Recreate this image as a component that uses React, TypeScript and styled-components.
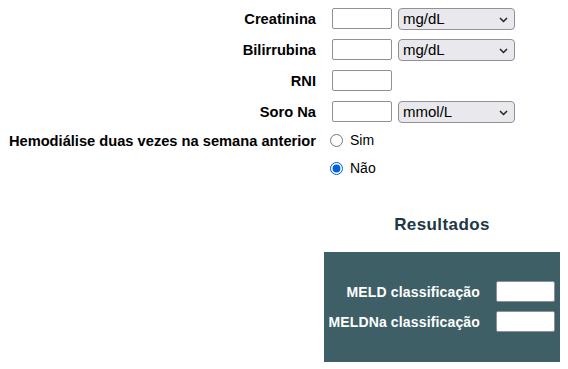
import React from 'react';
import styled, { createGlobalStyle } from 'styled-components';

const GlobalStyle = createGlobalStyle`
  body {
    margin: 8px;
    font-family: 'Liberation Sans', Arial, sans-serif;
    background: #fff;
    color: #000;
  }
`;

const Form = styled.div`
  display: grid;
  grid-template-columns: 308px auto;
  column-gap: 16px;
  row-gap: 10px;
  align-items: center;
`;

const Label = styled.label`
  justify-self: end;
  font-size: 14.67px;
  font-weight: bold;
  line-height: 16px;
  align-self: center;
`;

const TopLabel = styled(Label)`
  align-self: start;
  margin-top: 1px;
`;

const Field = styled.div`
  display: flex;
  align-items: center;
  gap: 6px;
  height: 21px;
`;

const TextInput = styled.input`
  box-sizing: border-box;
  width: 60px;
  height: 21px;
  border: 1px solid #8f8f9d;
  border-radius: 2px;
  background: #fff;
  padding: 0 4px;
  margin: 0;
  font: 13px 'Liberation Sans', Arial, sans-serif;
`;

const SelectWrap = styled.div`
  position: relative;
  width: 117px;
  height: 22px;
`;

const Select = styled.select`
  appearance: none;
  box-sizing: border-box;
  width: 100%;
  height: 100%;
  margin: 0;
  padding: 0 20px 0 4px;
  border: 1px solid #8f8f9d;
  border-radius: 4px;
  background: #e9e9ed;
  color: #000;
  font: 15px 'Liberation Sans', Arial, sans-serif;
`;

const Chevron = styled.svg`
  position: absolute;
  right: 7px;
  top: 9px;
  pointer-events: none;
`;

const Radios = styled.div`
  display: flex;
  flex-direction: column;
  gap: 12px;
  margin-left: -2px;
`;

const RadioOption = styled.label`
  display: flex;
  align-items: center;
  gap: 7px;
  height: 16px;
  font-size: 14px;
`;

const Radio = styled.input`
  width: 13px;
  height: 13px;
  margin: 0;
  accent-color: #0060df;
`;

const Results = styled.section`
  width: 236px;
  margin: 39px 0 0 auto;
`;

const Heading = styled.h2`
  margin: 0 0 17px;
  text-align: center;
  font-size: 17px;
  line-height: 20px;
  letter-spacing: 0.4px;
  color: #1b3843;
`;

const Panel = styled.div`
  box-sizing: border-box;
  height: 110px;
  background: #3e5f66;
  padding: 29px 5px 0 4px;
  display: flex;
  flex-direction: column;
  gap: 9px;
`;

const ResultRow = styled.div`
  display: flex;
  justify-content: flex-end;
  align-items: center;
  gap: 16px;
`;

const ResultLabel = styled.label`
  color: #fff;
  font-size: 14px;
  font-weight: bold;
  letter-spacing: 0.15px;
`;

const ResultInput = styled(TextInput)`
  width: 59px;
`;

const UnitSelect: React.FC<{ options: string[] }> = ({ options }) => (
  <SelectWrap>
    <Select defaultValue={options[0]}>
      {options.map(o => (
        <option key={o}>{o}</option>
      ))}
    </Select>
    <Chevron width="9" height="6" viewBox="0 0 9 6">
      <polyline points="1,1 4.5,4.5 8,1" fill="none" stroke="#222" strokeWidth="1.5" />
    </Chevron>
  </SelectWrap>
);

export default function App() {
  return (
    <>
      <GlobalStyle />
      <Form>
        <Label>Creatinina</Label>
        <Field>
          <TextInput />
          <UnitSelect options={['mg/dL', 'µmol/L']} />
        </Field>

        <Label>Bilirrubina</Label>
        <Field>
          <TextInput />
          <UnitSelect options={['mg/dL', 'µmol/L']} />
        </Field>

        <Label>RNI</Label>
        <Field>
          <TextInput />
        </Field>

        <Label>Soro Na</Label>
        <Field>
          <TextInput />
          <UnitSelect options={['mmol/L', 'mEq/L']} />
        </Field>

        <TopLabel>Hemodiálise duas vezes na semana anterior</TopLabel>
        <Radios>
          <RadioOption>
            <Radio type="radio" name="hd" />
            Sim
          </RadioOption>
          <RadioOption>
            <Radio type="radio" name="hd" defaultChecked />
            Não
          </RadioOption>
        </Radios>
      </Form>

      <Results>
        <Heading>Resultados</Heading>
        <Panel>
          <ResultRow>
            <ResultLabel>MELD classificação</ResultLabel>
            <ResultInput readOnly />
          </ResultRow>
          <ResultRow>
            <ResultLabel>MELDNa classificação</ResultLabel>
            <ResultInput readOnly />
          </ResultRow>
        </Panel>
      </Results>
    </>
  );
}
